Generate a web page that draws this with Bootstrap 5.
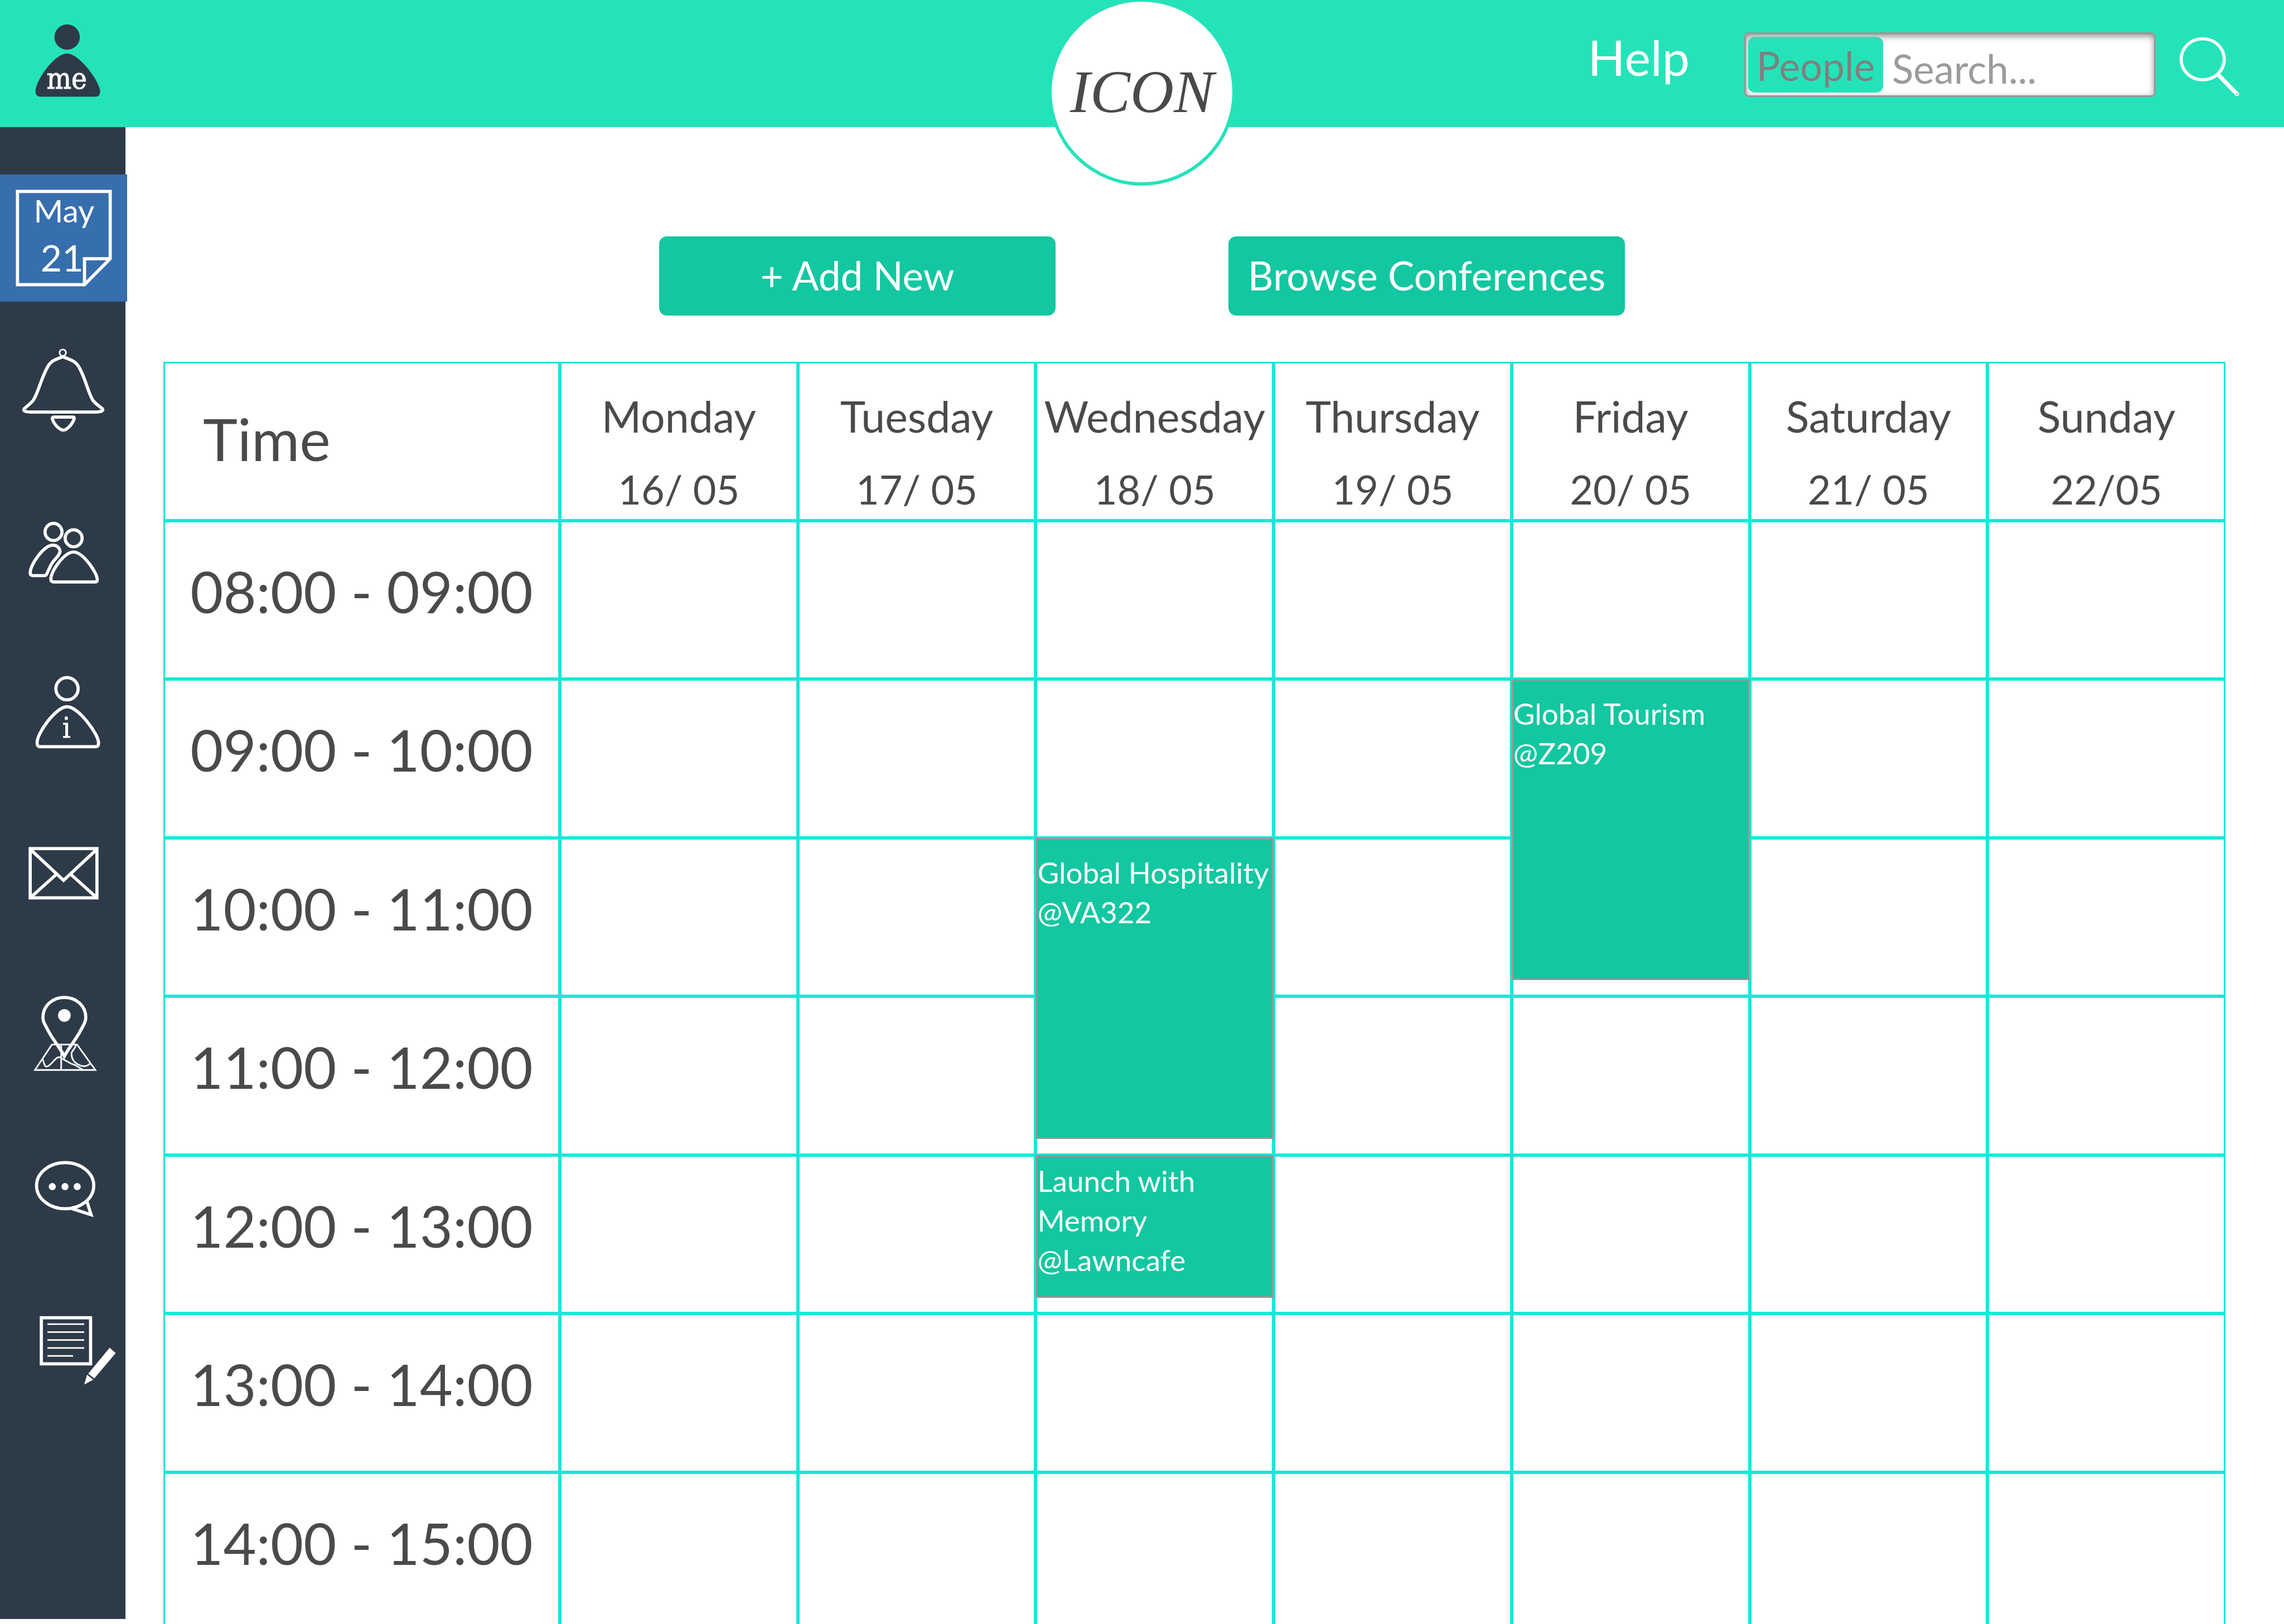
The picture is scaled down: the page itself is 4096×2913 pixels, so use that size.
<!DOCTYPE html>
<html lang="en">
<head>
<meta charset="utf-8">
<meta name="viewport" content="width=device-width, initial-scale=1">
<title>Schedule</title>
<link href="https://cdn.jsdelivr.net/npm/bootstrap@5.3.0/dist/css/bootstrap.min.css" rel="stylesheet">
<style>
  :root { --mint: #25e3b9; --green: #13c7a0; --line: #18e7d8; --navy: #2d3a48; --active: #376eae; --ink: #4a4a4a; --grey: #979797; }
  body { font-family: Lato, "Open Sans", sans-serif; color: var(--ink); background: #fff; }
  .topbar { height: 228px; background: var(--mint); padding-right: 74px; z-index: 2; }
  .tile { width: 228px; height: 228px; }
  .tile svg { width: 100%; height: 100%; }
  .brand { width: 336px; height: 336px; top: -3px; border: 6px solid var(--mint); color: var(--ink); font: italic 108px/1 "Liberation Serif", serif; }
  .tools { padding-top: 58px; }
  .help-link { font-size: 88px; line-height: 88px; margin-right: 98px; }
  .searchbox { width: 738px; height: 116px; border: 3px solid var(--grey); border-radius: 8px; padding: 5px 4px; box-shadow: inset 0 4px 12px rgba(0,0,0,.45); margin-right: 37px; }
  .scope { width: 242px; background: var(--mint); color: #808080; font-size: 71px; line-height: 104px; border-radius: 12px; }
  .query { font-size: 71px; line-height: 83px; padding: 12px 0 0 16px; min-width: 0; color: var(--ink); outline: 0; }
  .query::placeholder { color: #9b9b9b; opacity: 1; }
  .go { width: 119px; height: 119px; margin-top: 3px; }
  .side { width: 225px; background: var(--navy); padding-top: 85px; margin-bottom: 9px; }
  .side ul { gap: 56px; }
  .side .tile.active { background: var(--active); }
  .line-art { fill: none; stroke: #fff; stroke-width: 6; stroke-linejoin: round; }
  .actions { padding: 196px 225px 0 0; gap: 310px; }
  .action { width: 711px; height: 142px; padding: 0 0 4px; border-radius: 14px; background: var(--green); color: #fff; font-size: 71px; line-height: 83px; }
  .week { padding: 83px 105px 0 68px; }
  .week table { table-layout: fixed; border-collapse: separate; border-spacing: 0; height: 2276px; }
  .week th, .week td { border: 3px solid var(--line); padding: 0; font-weight: 400; vertical-align: top; position: relative; }
  .week thead th { height: 285px; }
  .week .hours { width: 711px; }
  .week .corner { font-size: 105px; line-height: 125px; padding: 72px 0 0 68px; }
  .week .slot { font-size: 102px; line-height: 125px; padding-top: 61px; text-align: center; }
  .week .day { font-size: 77px; line-height: 90px; padding-top: 49px; text-align: center; white-space: nowrap; }
  .day span { display: block; }
  .day span + span { margin-top: 41px; font-size: 72px; }
  .event { top: -3px; left: -3px; right: -3px; height: 540px; background: var(--green); border: 3px solid var(--grey); color: #fff; font-size: 53px; line-height: 71px; padding-top: 23px; white-space: nowrap; z-index: 1; }
  .event.one-hour { height: 256px; padding-top: 7px; }
</style>
</head>
<body>
<div class="d-flex flex-column vh-100 overflow-hidden">
  <header class="topbar d-flex justify-content-between align-items-start position-relative flex-shrink-0">
    <a href="#" class="tile" aria-label="My profile">
      <svg viewBox="0 0 240 240">
        <g fill="#2d3a48"><circle cx="126.700" cy="70" r="24"/>
        <path d="M76 182.500Q67 182 67 172C67 152 103 101 126.700 101C150 101 189 155 189 173Q189 182.500 181 182.500Z"/></g>
        <text x="126" y="167.500" fill="#fff" stroke="#fff" stroke-width="1" text-anchor="middle" font-family="DejaVu Serif Condensed, DejaVu Serif, serif" font-size="55">me</text>
      </svg>
    </a>
    <a href="#" class="brand rounded-circle bg-white text-decoration-none d-flex align-items-center justify-content-center position-absolute start-50 translate-middle-x">ICON</a>
    <div class="tools d-flex align-items-start">
      <a href="#" class="help-link text-white text-decoration-none">Help</a>
      <form class="searchbox d-flex bg-white" role="search">
        <button type="button" class="scope border-0 p-0 flex-shrink-0">People</button>
        <input type="text" class="query border-0 bg-transparent flex-grow-1" placeholder="Search..." aria-label="Search people">
      </form>
      <button type="button" class="go border-0 bg-transparent p-0 d-flex" aria-label="Search">
        <svg viewBox="4117 63 126 126" class="w-100 h-100" fill="none" stroke="#fff">
          <ellipse cx="4167" cy="111" rx="41" ry="39" stroke-width="6"/>
          <path d="M4197 141L4232 177" stroke-width="8" stroke-linecap="round"/>
          <circle cx="4232.500" cy="177" r="1.500" fill="#979797" stroke="none"/>
        </svg>
      </button>
    </div>
  </header>

  <div class="d-flex flex-grow-1 overflow-hidden">
    <nav class="side flex-shrink-0" aria-label="Main">
      <ul class="list-unstyled d-flex flex-column mb-0">
        <li><a href="#" class="tile active d-block" aria-current="page"><svg viewBox="0 330 240 240">
          <g class="line-art" style="stroke-linejoin:miter"><path d="M33 362H208V489L159.500 538H33Z"/><path d="M208 489H159.500V538"/></g>
          <g fill="#fff" font-family="Lato, sans-serif"><text x="121" y="420" text-anchor="middle" font-size="60">May</text><text x="117" y="513" text-anchor="middle" font-size="70">21</text></g>
        </svg></a></li>
        <li><a href="#" class="tile d-block" aria-label="Notifications"><svg viewBox="0 630 240 240"><g class="line-art">
          <circle cx="118.500" cy="667.500" r="6" style="stroke-width:3"/>
          <path d="M118.500 675L104 681Q95 685 90 694C77 717 72 744 63 757C60 762 50 769 45.500 773.500Q43 779 56 779.500H182Q196 779 193.500 773.500C188 769 179 763 175 757C166 742 160 712 148 693Q143 685 133 681Z"/>
          <path d="M102 789H138Q141 789 139.500 794C136 803 126 814 119.500 813.500C112 814 101 801 99 793Q98 789 102 789Z"/>
        </g></svg></a></li>
        <li><a href="#" class="tile d-block" aria-label="Contacts"><svg viewBox="0 929 240 240"><g class="line-art">
          <circle cx="101" cy="1006" r="16"/><circle cx="139" cy="1018" r="16"/>
          <path d="M101 1100.500Q96 1100 96 1095C96 1080 121 1044 139 1044C157 1044 183.500 1084 183.500 1095Q184 1100.500 180 1100.500Z"/>
          <path d="M62 1088.500Q57 1088 57 1083C57 1067 83 1031 100 1031C110 1031 115 1040 112.500 1046C110 1053 100 1060 96 1069Q90 1081 88.500 1085Q87 1088.500 84 1088.500Z"/>
        </g></svg></a></li>
        <li><a href="#" class="tile d-block" aria-label="Information"><svg viewBox="0 1229 240 240"><g class="line-art">
          <circle cx="126.500" cy="1303" r="21"/>
          <path d="M75 1412.500Q70 1412 70 1405C70 1386 106 1337 126.500 1337C148 1337 186 1389 186 1405Q186 1412.500 181 1412.500Z"/></g>
          <text x="125.500" y="1395" fill="#fff" stroke="#fff" stroke-width="1" text-anchor="middle" font-family="DejaVu Serif Condensed, DejaVu Serif, serif" font-size="53">i</text>
        </svg></a></li>
        <li><a href="#" class="tile d-block" aria-label="Messages"><svg viewBox="0 1528 240 240"><g class="line-art" style="stroke-linejoin:miter">
          <rect x="57" y="1605" width="126" height="93"/>
          <path d="M58 1607L120 1665L182 1607M58 1697L107 1653M182 1697L133 1653"/>
        </g></svg></a></li>
        <li><a href="#" class="tile d-block" aria-label="Map"><svg viewBox="0 1828 240 240"><g class="line-art" style="stroke-linejoin:miter">
          <path d="M121.500 1998C112 1980 99 1966 90 1948C85 1938 81 1934 81 1925C81 1903 99 1887 121.500 1887C144 1887 162 1903 162 1925C162 1934 157 1940 153 1948C144 1966 131 1980 121.500 1998Z"/>
          <circle cx="121.500" cy="1921" r="12" fill="#fff" style="stroke:none"/>
          <g style="stroke-width:3"><path d="M98 1976H145.500L180 2024H66ZM115.500 1976V2024"/>
          <path d="M80 2002L84 2014Q86 2020 92 2016C98 2012 104 2003 108 2001Q112 1998 118 2003L134 2012L142 2015L157 2024"/>
          <path d="M143 1977C142 1985 135 1988 135 1993C135 2003 140 2010 148 2014C156 2018 164 2018 170 2012"/></g>
        </g></svg></a></li>
        <li><a href="#" class="tile d-block" aria-label="Chat"><svg viewBox="0 2127 240 240"><g class="line-art" style="stroke-linejoin:miter">
          <ellipse cx="123" cy="2242.500" rx="54" ry="43.500"/><path d="M164 2272L172 2297.500L136 2286"/></g>
          <g fill="#fff"><circle cx="98.700" cy="2244.300" r="6.700"/><circle cx="122.700" cy="2244.300" r="6.700"/><circle cx="145.700" cy="2244.300" r="6.700"/></g>
        </svg></a></li>
        <li><a href="#" class="tile d-block" aria-label="Notes"><svg viewBox="0 2427 240 240"><g class="line-art" style="stroke-linejoin:miter">
          <rect x="78" y="2493" width="93" height="87"/>
          <path style="stroke-width:3" d="M89.500 2505H159M89.500 2520H159M89.500 2535H159M89.500 2550H159M89.500 2565H138"/></g>
          <path fill="#fff" d="M207 2549.500L218.500 2559.500L178 2607.500L166.500 2598.500ZM164.300 2600.500L176 2610L159 2619Z"/>
        </svg></a></li>
      </ul>
    </nav>

    <main class="flex-grow-1">
      <div class="actions d-flex justify-content-center">
        <button type="button" class="action border-0">+ Add New</button>
        <button type="button" class="action border-0">Browse Conferences</button>
      </div>
      <div class="week">
        <table class="w-100">
          <thead>
            <tr>
              <th scope="col" class="hours corner text-start">Time</th>
              <th scope="col" class="day"><span>Monday</span><span>16/ 05</span></th>
              <th scope="col" class="day"><span>Tuesday</span><span>17/ 05</span></th>
              <th scope="col" class="day"><span>Wednesday</span><span>18/ 05</span></th>
              <th scope="col" class="day"><span>Thursday</span><span>19/ 05</span></th>
              <th scope="col" class="day"><span>Friday</span><span>20/ 05</span></th>
              <th scope="col" class="day"><span>Saturday</span><span>21/ 05</span></th>
              <th scope="col" class="day"><span>Sunday</span><span>22/05</span></th>
            </tr>
          </thead>
          <tbody>
            <tr><th scope="row" class="slot">08:00 - 09:00</th><td></td><td></td><td></td><td></td><td></td><td></td><td></td></tr>
            <tr><th scope="row" class="slot">09:00 - 10:00</th><td></td><td></td><td></td><td></td><td><div class="event position-absolute">Global Tourism<br>@Z209</div></td><td></td><td></td></tr>
            <tr><th scope="row" class="slot">10:00 - 11:00</th><td></td><td></td><td><div class="event position-absolute">Global Hospitality<br>@VA322</div></td><td></td><td></td><td></td><td></td></tr>
            <tr><th scope="row" class="slot">11:00 - 12:00</th><td></td><td></td><td></td><td></td><td></td><td></td><td></td></tr>
            <tr><th scope="row" class="slot">12:00 - 13:00</th><td></td><td></td><td><div class="event one-hour position-absolute">Launch with<br>Memory<br>@Lawncafe</div></td><td></td><td></td><td></td><td></td></tr>
            <tr><th scope="row" class="slot">13:00 - 14:00</th><td></td><td></td><td></td><td></td><td></td><td></td><td></td></tr>
            <tr><th scope="row" class="slot">14:00 - 15:00</th><td></td><td></td><td></td><td></td><td></td><td></td><td></td></tr>
          </tbody>
        </table>
      </div>
    </main>
  </div>
</div>
<script src="https://cdn.jsdelivr.net/npm/bootstrap@5.3.0/dist/js/bootstrap.bundle.min.js"></script>
</body>
</html>
